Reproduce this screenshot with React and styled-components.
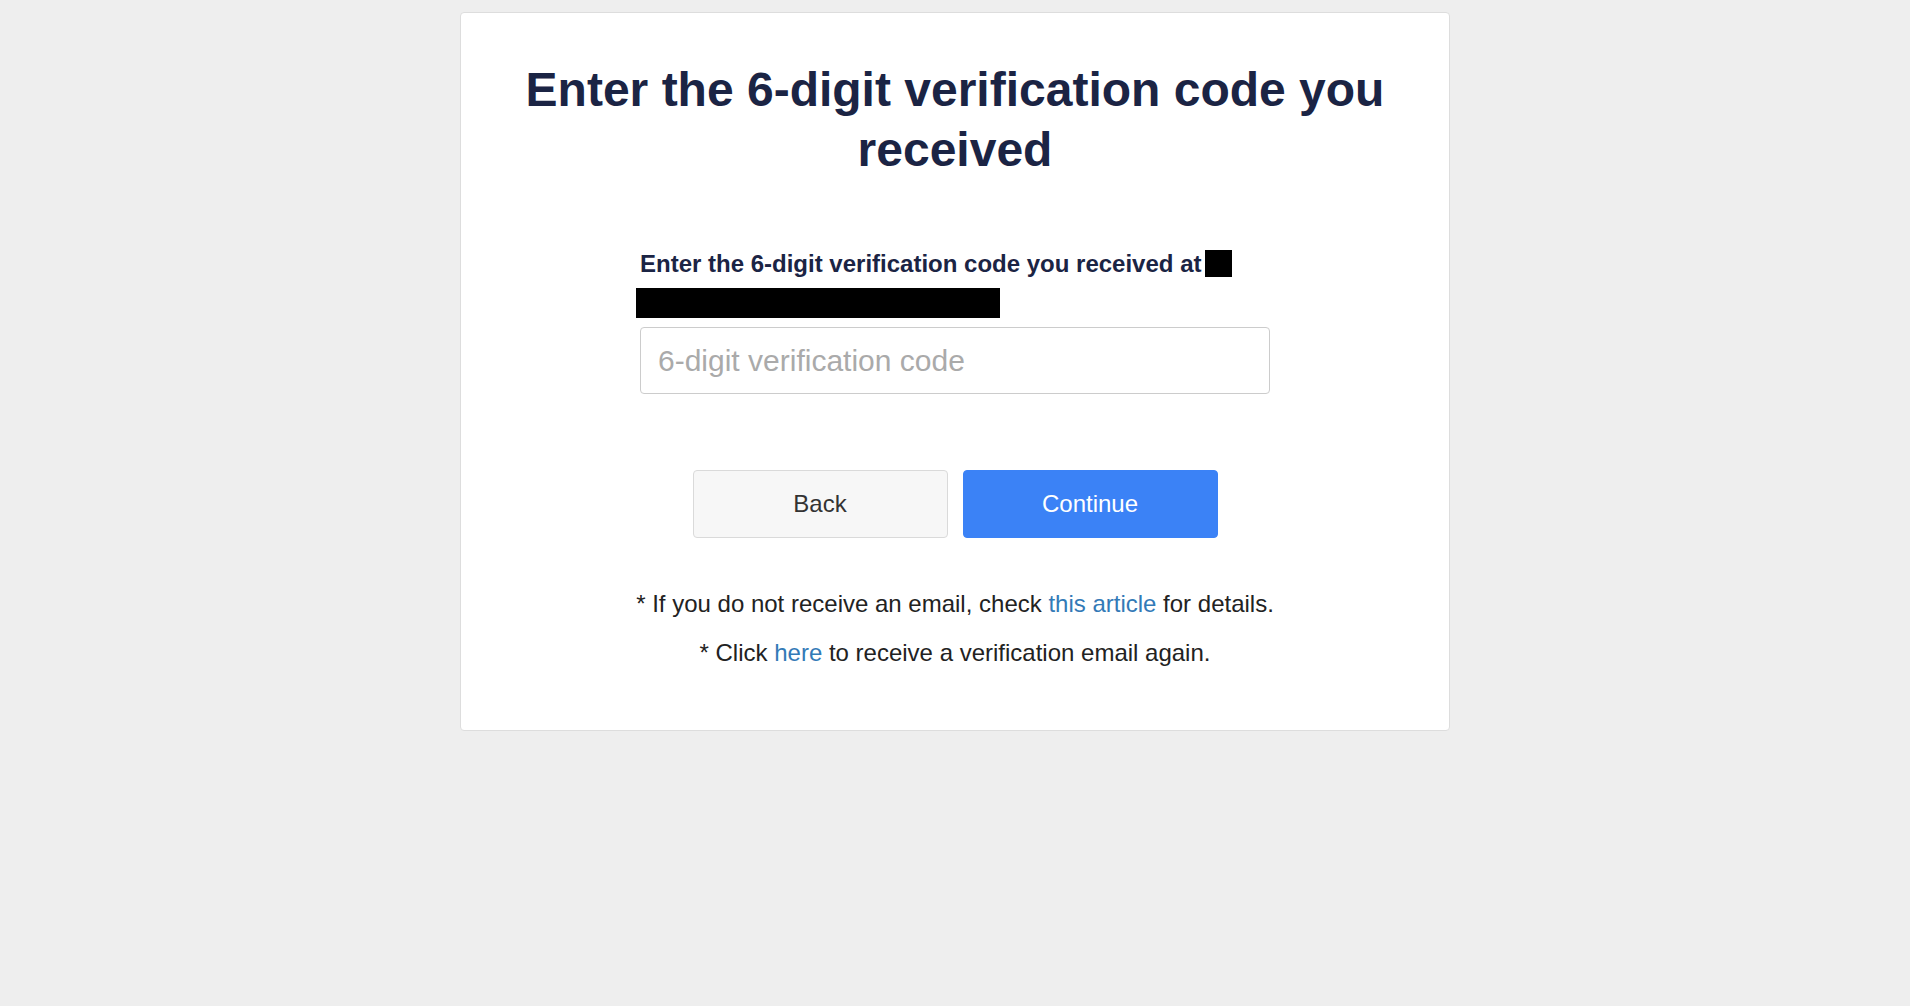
import React from 'react';
import styled, { createGlobalStyle } from 'styled-components';

const GlobalStyle = createGlobalStyle`
  html, body {
    margin: 0;
    padding: 0;
    background: #eeeeee;
    font-family: 'Liberation Sans', Arial, sans-serif;
  }
  * {
    box-sizing: border-box;
  }
`;

const Page = styled.div`
  min-height: 100vh;
  padding-top: 12px;
`;

const Card = styled.div`
  width: 990px;
  margin: 0 auto;
  background: #fff;
  border: 1px solid #dddddd;
  border-radius: 4px;
  padding: 47px 60px 59px 60px;
`;

const Title = styled.h1`
  margin: 0;
  font-size: 48px;
  line-height: 60px;
  font-weight: bold;
  text-align: center;
  color: #1b2444;
`;

const Form = styled.div`
  width: 630px;
  margin: 69px auto 0 auto;
`;

const Label = styled.label`
  display: block;
  font-size: 24px;
  line-height: 30px;
  font-weight: bold;
  color: #1b2444;
`;

const Redacted = styled.span`
  display: inline-block;
  background: #000;
  width: ${(p) => p.$w}px;
  height: ${(p) => p.$h}px;
  vertical-align: ${(p) => (p.$inline ? '-5px' : 'top')};
  margin-left: ${(p) => p.$ml || 0}px;
`;

const RedactedLine = styled.div`
  height: 30px;
  margin-top: 9px;
  margin-left: -4px;
  line-height: 0;
`;

const CodeInput = styled.input`
  display: block;
  width: 100%;
  height: 67px;
  margin-top: 9px;
  padding: 0 17px;
  border: 1px solid #cccccc;
  border-radius: 4px;
  font-family: 'Liberation Sans', Arial, sans-serif;
  font-size: 30px;
  color: #333;
  outline: none;
  &::placeholder {
    color: #aaaaaa;
  }
`;

const Buttons = styled.div`
  display: flex;
  justify-content: center;
  gap: 15px;
  margin-top: 76px;
`;

const Button = styled.button`
  width: 255px;
  height: 68px;
  border-radius: 4px;
  font-family: 'Liberation Sans', Arial, sans-serif;
  font-size: 24px;
  cursor: pointer;
  border: 1px solid ${(p) => (p.$primary ? '#3b82f6' : '#dadada')};
  background: ${(p) => (p.$primary ? '#3b82f6' : '#f7f7f7')};
  color: ${(p) => (p.$primary ? '#ffffff' : '#333333')};
`;

const Notes = styled.div`
  margin-top: 48px;
  text-align: center;
`;

const Note = styled.p`
  margin: 0 0 13px 0;
  font-size: 24px;
  line-height: 36px;
  color: #222222;
  &:last-child {
    margin-bottom: 0;
  }
`;

const Link = styled.a`
  color: #337ab7;
  text-decoration: none;
`;

export default function App() {
  return (
    <>
      <GlobalStyle />
      <Page>
        <Card>
          <Title>Enter the 6-digit verification code you received</Title>
          <Form>
            <Label htmlFor="code">
              Enter the 6-digit verification code you received at
              <Redacted $w={27} $h={27} $inline $ml={4} />
            </Label>
            <RedactedLine>
              <Redacted $w={364} $h={30} />
            </RedactedLine>
            <CodeInput id="code" type="text" placeholder="6-digit verification code" />
          </Form>
          <Buttons>
            <Button>Back</Button>
            <Button $primary>Continue</Button>
          </Buttons>
          <Notes>
            <Note>
              * If you do not receive an email, check <Link href="#">this article</Link> for details.
            </Note>
            <Note>
              * Click <Link href="#">here</Link> to receive a verification email again.
            </Note>
          </Notes>
        </Card>
      </Page>
    </>
  );
}
